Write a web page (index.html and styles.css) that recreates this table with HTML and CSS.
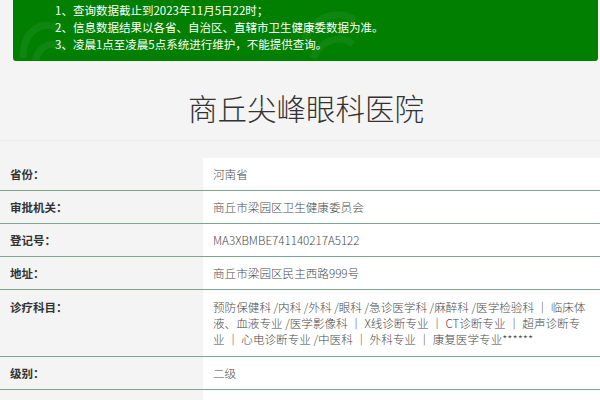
FILE: index.html
```html
<!DOCTYPE html>
<html lang="zh-CN">
<head>
<meta charset="utf-8">
<title>商丘尖峰眼科医院</title>
<link rel="stylesheet" href="styles.css">
</head>
<body>
<div class="notice">
  <svg class="wm" width="585" height="60" viewBox="0 0 585 60" aria-hidden="true">
    <g fill="none" stroke="#ffffff" stroke-opacity="0.06" stroke-width="7">
      <path d="M10 58 C 10 30, 30 18, 48 30"/>
      <path d="M22 62 C 26 44, 40 40, 52 50"/>
      <path d="M292 40 C 300 18, 322 8, 342 20"/>
      <path d="M300 58 C 308 40, 326 34, 340 44"/>
    </g>
  </svg>
  <p class="notice-line">1、查询数据截止到2023年11月5日22时；</p>
  <p class="notice-line">2、信息数据结果以各省、自治区、直辖市卫生健康委数据为准。</p>
  <p class="notice-line">3、凌晨1点至凌晨5点系统进行维护，不能提供查询。</p>
</div>

<h1 class="title">商丘尖峰眼科医院</h1>

<div class="info">
  <div class="row"><div class="label">省份：</div><div class="value">河南省</div></div>
  <div class="row"><div class="label">审批机关：</div><div class="value">商丘市梁园区卫生健康委员会</div></div>
  <div class="row"><div class="label">登记号：</div><div class="value">MA3XBMBE741140217A5122</div></div>
  <div class="row"><div class="label">地址：</div><div class="value">商丘市梁园区民主西路999号</div></div>
  <div class="row"><div class="label">诊疗科目：</div><div class="value">预防保健科 /内科 /外科 /眼科 /急诊医学科 /麻醉科 /医学检验科 <span class="sep">｜</span> 临床体液、血液专业 /医学影像科 <span class="sep">｜</span> X线诊断专业 <span class="sep">｜</span> CT诊断专业 <span class="sep">｜</span> 超声诊断专业 <span class="sep">｜</span> 心电诊断专业 /中医科 <span class="sep">｜</span> 外科专业 <span class="sep">｜</span> 康复医学专业******</div></div>
  <div class="row"><div class="label">级别：</div><div class="value">二级</div></div>
  <div class="row"><div class="label">&nbsp;</div><div class="value">&nbsp;</div></div>
</div>
</body>
</html>
```

FILE: styles.css
```css
html, body {
  margin: 0;
  padding: 0;
  background: #f4f4f4;
  font-family: "Noto Sans CJK SC", "Noto Sans", sans-serif;
  color: #333;
}

.notice {
  position: relative;
  overflow: hidden;
  margin: 0 2px 0 13px;
  padding: 2px 0 8px 42px;
  background: #007f00;
  border-radius: 0 0 3px 3px;
  color: #fff;
  font-size: 11.5px;
  line-height: 17px;
}

.wm {
  position: absolute;
  left: 0;
  top: 0;
}

.notice-line {
  position: relative;
  margin: 0;
}

.title {
  margin: 26px 0 0;
  padding: 0 0 13px 12px;
  border-bottom: 1px solid #ebebeb;
  text-align: center;
  font-size: 29.5px;
  line-height: 40px;
  font-weight: 300;
  color: #333;
}

.info {
  margin-top: 17px;
}

.row {
  display: grid;
  grid-template-columns: 203px 1fr;
  border-bottom: 1px solid #7ea58e;
}

.label {
  padding: 8px 10px;
  font-size: 11.5px;
  line-height: 16px;
  font-weight: bold;
  color: #333;
}

.value {
  padding: 8px 11px 8px 10px;
  background: #fff;
  font-size: 11.6px;
  line-height: 16px;
  font-weight: 300;
  color: #4a4a4a;
}

.row:nth-child(5) .label,
.row:nth-child(5) .value {
  padding-top: 9px;
  padding-bottom: 9px;
}

.sep {
  color: #555;
  font-weight: bold;
}
```
